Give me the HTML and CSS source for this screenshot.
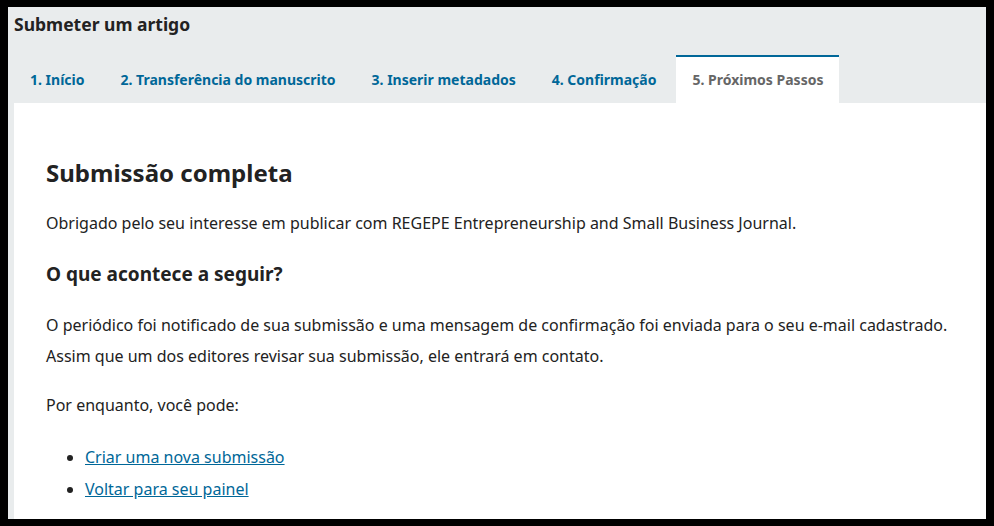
FILE: index.html
```html
<!DOCTYPE html>
<html lang="pt-BR">
<head>
    <meta charset="UTF-8">
    <meta name="viewport" content="width=device-width, initial-scale=1.0">
    <title>Submeter um artigo</title>
    <link rel="stylesheet" href="styles.css">
</head>
<body>
    <div class="page">
        <h1 class="page-title">Submeter um artigo</h1>

        <ul class="tabs">
            <li class="tab"><a href="#">1. Início</a></li>
            <li class="tab"><a href="#">2. Transferência do manuscrito</a></li>
            <li class="tab"><a href="#">3. Inserir metadados</a></li>
            <li class="tab"><a href="#">4. Confirmação</a></li>
            <li class="tab active"><a href="#">5. Próximos Passos</a></li>
        </ul>

        <div class="panel">
            <h2>Submissão completa</h2>
            <p class="intro">Obrigado pelo seu interesse em publicar com REGEPE Entrepreneurship and Small Business Journal.</p>

            <h3>O que acontece a seguir?</h3>
            <p>O periódico foi notificado de sua submissão e uma mensagem de confirmação foi enviada para o seu e-mail cadastrado. Assim que um dos editores revisar sua submissão, ele entrará em contato.</p>

            <p>Por enquanto, você pode:</p>
            <ul class="links">
                <li><a href="#">Criar uma nova submissão</a></li>
                <li><a href="#">Voltar para seu painel</a></li>
            </ul>
        </div>
    </div>
</body>
</html>
```

FILE: styles.css
```css
html, body {
    height: 100%;
}
body {
    margin: 0;
    padding: 7px 8px;
    box-sizing: border-box;
    background: #000;
    font-family: "Noto Sans", sans-serif;
    color: #222;
}
.page {
    height: 100%;
    background: #e9eced;
    padding-left: 6px;
    display: flex;
    flex-direction: column;
    overflow: hidden;
}
.page-title {
    margin: 0;
    padding-top: 5px;
    font-size: 17.5px;
    line-height: 24px;
    font-weight: 700;
    color: #222;
}
.tabs {
    list-style: none;
    margin: 19px 0 0;
    padding: 0;
    display: flex;
    gap: 4px;
}
.tab a {
    display: block;
    padding: 0 16px;
    line-height: 46px;
    border-top: 2px solid transparent;
    font-size: 14px;
    font-weight: 700;
    color: #006798;
    text-decoration: none;
}
.tab.active a {
    background: #fff;
    border-top-color: #006798;
    color: #666;
}
.panel {
    flex: 1;
    background: #fff;
    padding: 54px 32px 0;
}
.panel h2 {
    margin: 0 0 19px;
    font-size: 24px;
    line-height: 32px;
    font-weight: 700;
}
.panel h3 {
    margin: 0 0 23px;
    font-size: 19px;
    line-height: 26px;
    font-weight: 700;
}
.panel p {
    margin: 0 0 18px;
    font-size: 16px;
    line-height: 31px;
}
.panel p.intro {
    margin-bottom: 22px;
}
.links {
    margin: 20px 0 0;
    padding-left: 39px;
    font-size: 16px;
    line-height: 32px;
}
.links a {
    color: #006798;
}
```
